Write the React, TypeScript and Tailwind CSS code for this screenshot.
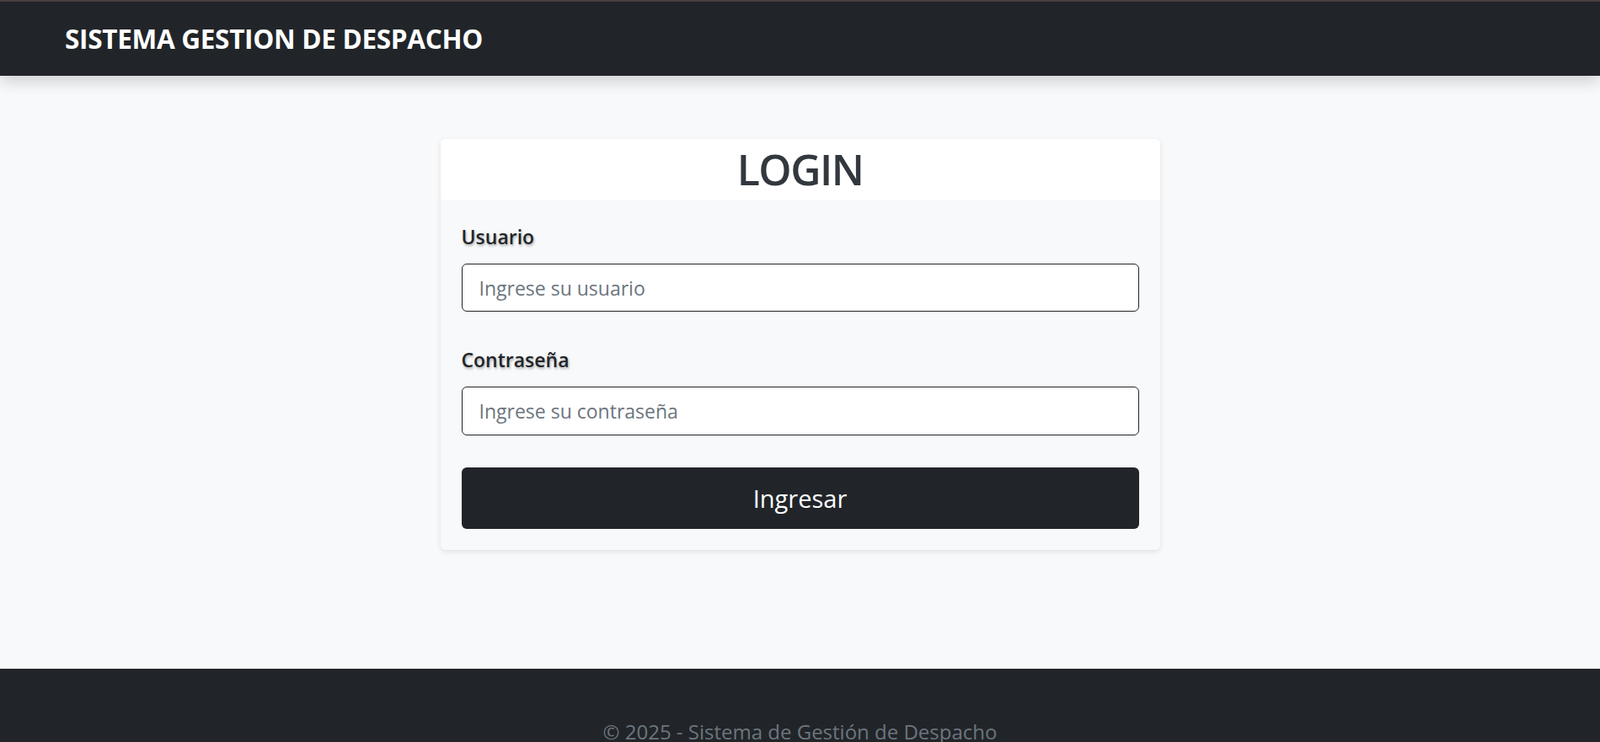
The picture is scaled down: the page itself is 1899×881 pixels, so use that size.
export default function App() {
  return (
    <div className="min-h-screen flex flex-col bg-[#f8f9fa] font-['Open_Sans',sans-serif]">
      <header className="relative z-10 h-[90px] border-t-2 border-[#4a3f3f] bg-[#212529] shadow-[0_8px_16px_rgba(0,0,0,0.15)] flex items-center px-[77px]">
        <h1 className="text-[31.5px] font-bold text-white tracking-[-0.3px]">SISTEMA GESTION DE DESPACHO</h1>
      </header>

      <main className="flex-1 flex justify-center pt-[75px] pb-[141px]">
        <div className="w-[854px] h-fit rounded-md overflow-hidden bg-[#f8f9fa] shadow-[0_2px_6px_rgba(0,0,0,0.1)]">
          <div className="h-[72px] bg-white flex items-center justify-center">
            <h2 className="text-[50px] font-semibold leading-none tracking-[-1.5px] text-[#32383e]">LOGIN</h2>
          </div>
          <div className="px-[25px] pt-[28px] pb-[25px]">
            <label className="block text-[23px] font-semibold leading-[33px] text-[#212529] [text-shadow:1px_2px_3px_rgba(0,0,0,0.3)]">
              Usuario
            </label>
            <input
              type="text"
              placeholder="Ingrese su usuario"
              className="mt-[15px] block w-full h-[57px] rounded-md border border-[#212529] bg-white px-[20px] text-[23px] placeholder:text-[#6c757d] focus:outline-none"
            />
            <label className="mt-[41px] block text-[23px] font-semibold leading-[33px] text-[#212529] [text-shadow:1px_2px_3px_rgba(0,0,0,0.3)]">
              Contraseña
            </label>
            <input
              type="password"
              placeholder="Ingrese su contraseña"
              className="mt-[15px] block w-full h-[58px] rounded-md border border-[#212529] bg-white px-[20px] text-[23px] placeholder:text-[#6c757d] focus:outline-none"
            />
            <button className="mt-[38px] block w-full h-[73px] rounded-md bg-[#212529] text-white text-[29px]">
              Ingresar
            </button>
          </div>
        </div>
      </main>

      <footer className="bg-[#212529] pt-[57px] pb-[20px] text-center">
        <p className="text-[24px] text-[#6c757d]">© 2025 - Sistema de Gestión de Despacho</p>
      </footer>
    </div>
  );
}
